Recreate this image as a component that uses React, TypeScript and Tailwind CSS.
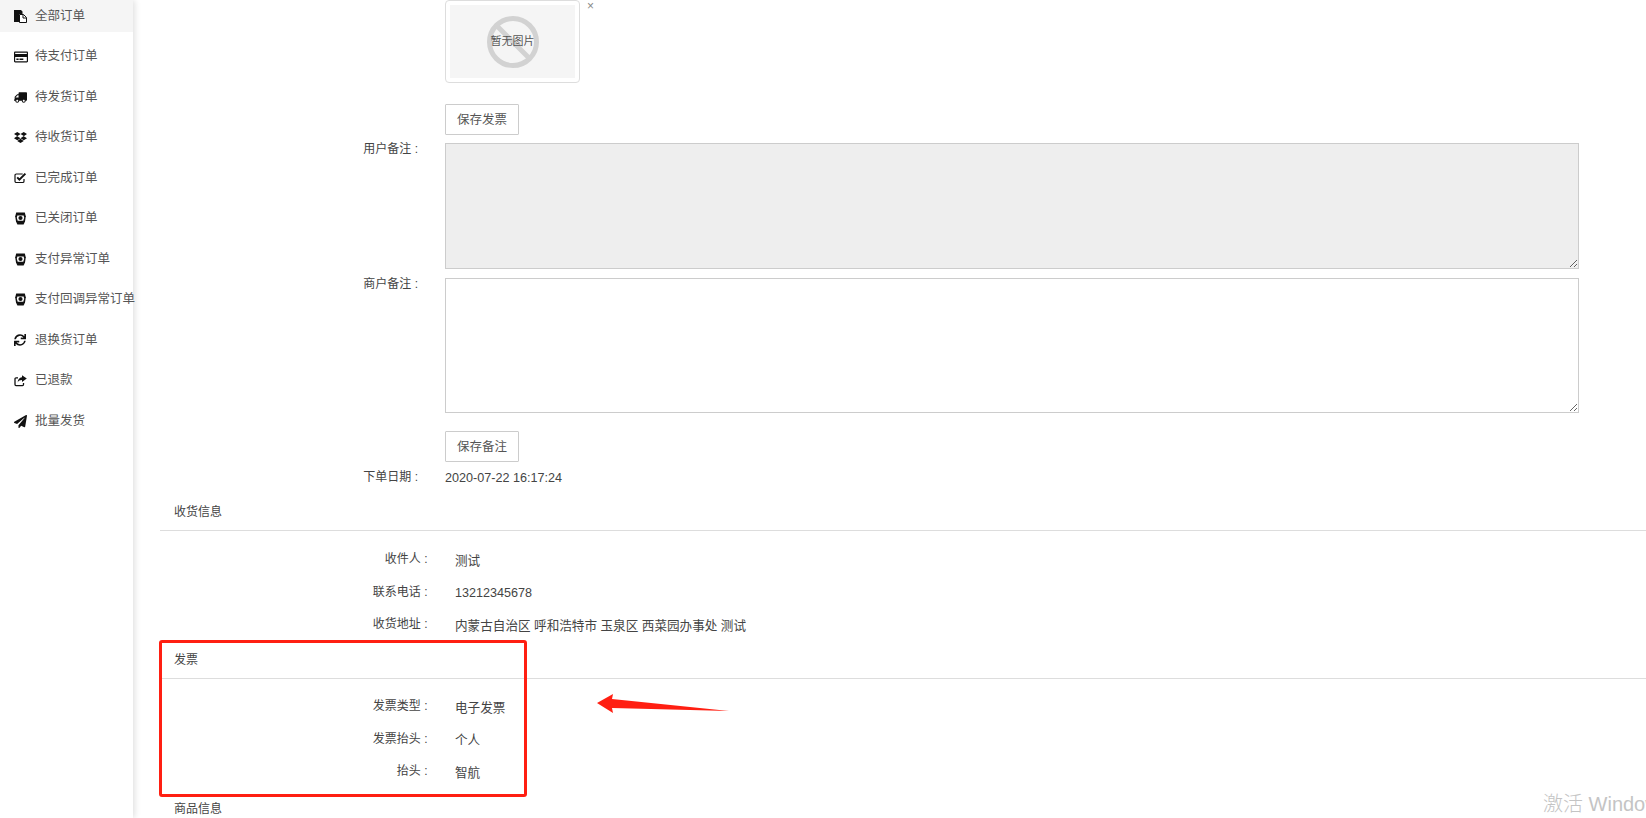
import React from 'react';
import { FaRegCreditCard, FaTruck, FaDropbox, FaSync, FaPaperPlane } from 'react-icons/fa';

const FilesIcon = () => (
  <svg width="13" height="13" viewBox="0 0 13 13">
    <path d="M0 0h7l1.5 1.5V4H5v8H0z" fill="#111" />
    <path d="M5.5 4.5h4l3 3v5h-7z" fill="#fff" stroke="#111" strokeWidth="1" />
    <path d="M9 4.5v3.5h3.5" fill="none" stroke="#111" strokeWidth="1" />
  </svg>
);

const CheckIcon = () => (
  <svg width="13" height="12" viewBox="0 0 13 12">
    <path d="M10 7v2.2A1.3 1.3 0 0 1 8.7 10.5H2.3A1.3 1.3 0 0 1 1 9.2V3.3A1.3 1.3 0 0 1 2.3 2h6.4" fill="none" stroke="#111" strokeWidth="1.2" />
    <path d="M3.2 5.4l2.2 2.2 6-6" fill="none" stroke="#111" strokeWidth="2" />
  </svg>
);

// hooded round badge used for the closed / exception entries
const BadgeIcon = () => (
  <svg width="11" height="13" viewBox="0 0 11 13" className="ml-[1px]">
    <path d="M1.2 .6h8.6l1 3.6-.8 5.4-1.4 2.8H2.4L1 9.6.2 4.2z" fill="#111" />
    <path d="M2.4 3.4h6.2l.6 2.4-.9 3H2.7l-.9-3z" fill="#fff" />
    <circle cx="5.5" cy="6" r="2.1" fill="#111" />
  </svg>
);

const ShareIcon = () => (
  <svg width="13" height="12" viewBox="0 0 13 12">
    <path d="M9.5 8v1.6a1 1 0 0 1-1 1H2a1 1 0 0 1-1-1V3.8a1 1 0 0 1 1-1h2" fill="none" stroke="#111" strokeWidth="1.3" />
    <path d="M8 .3L12.8 3.6 8 7V5.1C5.8 5.1 4.5 5.8 3.7 7.6 3.7 4.6 5.3 2.4 8 2.2z" fill="#111" />
  </svg>
);

const navItems = [
  { label: '全部订单', icon: <FilesIcon />, active: true },
  { label: '待支付订单', icon: <FaRegCreditCard size={14} /> },
  { label: '待发货订单', icon: <FaTruck size={13} className="-scale-x-100" /> },
  { label: '待收货订单', icon: <FaDropbox size={13} /> },
  { label: '已完成订单', icon: <CheckIcon /> },
  { label: '已关闭订单', icon: <BadgeIcon /> },
  { label: '支付异常订单', icon: <BadgeIcon /> },
  { label: '支付回调异常订单', icon: <BadgeIcon /> },
  { label: '退换货订单', icon: <FaSync size={12} /> },
  { label: '已退款', icon: <ShareIcon /> },
  { label: '批量发货', icon: <FaPaperPlane size={13} /> },
];

const Sidebar = () => (
  <aside className="w-[133px] shrink-0 bg-white shadow-[2px_0_6px_rgba(0,0,0,0.12)] z-10">
    {navItems.map((item) => (
      <div
        key={item.label}
        className={`flex items-center h-8 mb-[8.5px] whitespace-nowrap text-[12.5px] text-[#555] ${item.active ? 'bg-[#f5f5f5]' : ''}`}
      >
        <span className="w-[35px] pl-[14px] flex items-center text-[#111] shrink-0">{item.icon}</span>
        {item.label}
      </div>
    ))}
  </aside>
);

const FormRow = ({ label, children, className = '' }: { label?: string; children: React.ReactNode; className?: string }) => (
  <div className={`flex ${className}`}>
    <div className="w-[258px] text-right text-xs text-[#444] shrink-0 leading-4 -mt-[2px]">{label ? `${label} :` : ''}</div>
    <div className="ml-[27px]">{children}</div>
  </div>
);

const SaveButton = ({ children }: { children: React.ReactNode }) => (
  <button className="block h-[31px] w-[74px] pt-[1px] border border-[#ccc] rounded-[1px] bg-white text-[12.5px] text-[#555]">{children}</button>
);

const SectionTitle = ({ children, className = '' }: { children: React.ReactNode; className?: string }) => (
  <div className={`flex items-center border-b border-[#ddd] pl-[14px] text-xs text-[#444] ${className}`}>{children}</div>
);

const InfoRow = ({ label, value }: { label: string; value: string }) => (
  <div className="flex h-[32.4px] items-center">
    <div className="w-[267.5px] text-right text-xs text-[#444] shrink-0 -mt-[2px]">{label} :</div>
    <div className="ml-[27.5px] mt-[2px] text-[12.6px] text-[#444]">{value}</div>
  </div>
);

const NoImage = () => (
  <div className="flex w-[135px] h-[83px] border border-[#ddd] rounded-[4px] p-1">
    <div className="relative flex flex-1 items-center justify-center bg-[#f5f5f5]">
      <svg width="52" height="52" viewBox="0 0 52 52" className="absolute">
        <circle cx="26" cy="26" r="23.5" fill="none" stroke="#d2d2d2" strokeWidth="5" />
        <line x1="9" y1="9" x2="43" y2="43" stroke="#d2d2d2" strokeWidth="5" />
      </svg>
      <span className="relative text-[11px] text-[#555]">暂无图片</span>
    </div>
  </div>
);

export default function App() {
  return (
    <div className="relative flex h-[818px] overflow-hidden bg-white font-['Liberation_Sans','Noto_Sans_CJK_SC',sans-serif]">
      <Sidebar />
      <main className="flex-1 pl-[27px]">
        <FormRow>
          <div className="flex">
            <NoImage />
            <span className="ml-[7px] text-xs leading-3 text-[#888]">×</span>
          </div>
          <div className="mt-[21px]">
            <SaveButton>保存发票</SaveButton>
          </div>
        </FormRow>
        <FormRow label="用户备注" className="mt-[8px]">
          <textarea readOnly className="block w-[1134px] h-[126px] border border-[#ccc] bg-[#eeeeee]" />
        </FormRow>
        <FormRow label="商户备注" className="mt-[9px]">
          <textarea className="block w-[1134px] h-[135px] border border-[#ccc] bg-white" />
          <div className="mt-[18px]">
            <SaveButton>保存备注</SaveButton>
          </div>
        </FormRow>
        <div className="flex h-7 mt-[2px] items-center">
          <div className="w-[258px] text-right text-xs text-[#444] shrink-0 -mt-[2px]">下单日期 :</div>
          <div className="ml-[27px] text-[12.6px] text-[#444]">2020-07-22 16:17:24</div>
        </div>

        <SectionTitle className="h-[39px] pt-[1px]">收货信息</SectionTitle>
        <div className="pt-[13px]">
          <InfoRow label="收件人" value="测试" />
          <InfoRow label="联系电话" value="13212345678" />
          <InfoRow label="收货地址" value="内蒙古自治区 呼和浩特市 玉泉区 西菜园办事处 测试" />
        </div>

        <SectionTitle className="h-[38px]">发票</SectionTitle>
        <div className="pt-[12px]">
          <InfoRow label="发票类型" value="电子发票" />
          <InfoRow label="发票抬头" value="个人" />
          <InfoRow label="抬头" value="智航" />
        </div>
        <div className="flex h-[41px] items-center pl-[14px] text-xs text-[#444]">商品信息</div>
      </main>

      {/* annotations on top of the screenshot */}
      <div className="absolute left-[159px] top-[640px] w-[368px] h-[157px] border-[3px] border-[#ff1f12] rounded-[3px]" />
      <svg className="absolute left-[595px] top-[690px]" width="140" height="26" viewBox="0 0 140 26">
        <path d="M2 13 L18 4 L17 9 L134 21 L17 18 L18 23 Z" fill="#ff1f12" />
      </svg>
      <div className="absolute left-[1543px] top-[790px] whitespace-nowrap text-xl font-light text-[#c4c4c4]">激活 Windows</div>
    </div>
  );
}
